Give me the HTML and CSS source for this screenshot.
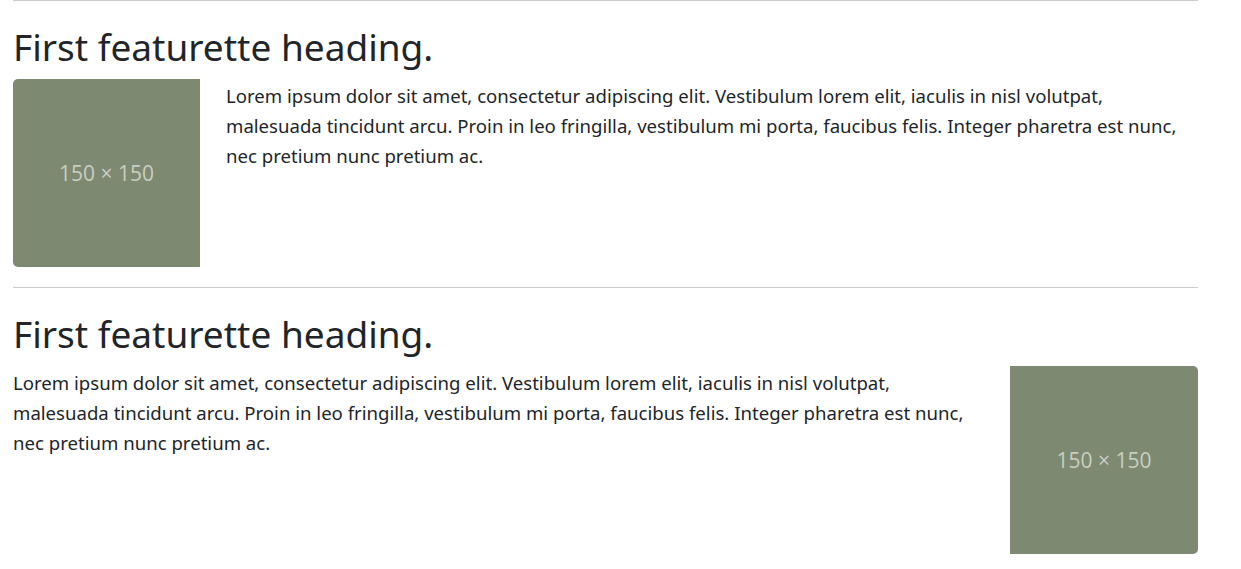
FILE: index.html
```html
<!DOCTYPE html>
<html lang="en">
<head>
<meta charset="utf-8">
<title>Featurettes</title>
<link rel="stylesheet" href="styles.css">
</head>
<body>
<main class="container">
  <section class="featurette">
    <h2 class="featurette-heading">First featurette heading.</h2>
    <div class="featurette-row img-left">
      <div class="placeholder round-left"><span>150 × 150</span></div>
      <p class="lead">Lorem ipsum dolor sit amet, consectetur adipiscing elit. Vestibulum lorem elit, iaculis in nisl volutpat, malesuada tincidunt arcu. Proin in leo fringilla, vestibulum mi porta, faucibus felis. Integer pharetra est nunc, nec pretium nunc pretium ac.</p>
    </div>
  </section>
  <section class="featurette">
    <h2 class="featurette-heading">First featurette heading.</h2>
    <div class="featurette-row img-right">
      <p class="lead">Lorem ipsum dolor sit amet, consectetur adipiscing elit. Vestibulum lorem elit, iaculis in nisl volutpat, malesuada tincidunt arcu. Proin in leo fringilla, vestibulum mi porta, faucibus felis. Integer pharetra est nunc, nec pretium nunc pretium ac.</p>
      <div class="placeholder round-right"><span>150 × 150</span></div>
    </div>
  </section>
</main>
</body>
</html>
```
FILE: styles.css
```css
* { box-sizing: border-box; }
html, body { margin: 0; padding: 0; background: #fff; }
body {
  font-family: "Noto Sans", "Open Sans", sans-serif;
  color: #212529;
}
.container {
  width: 1185px;
  margin-left: 13px;
}
.featurette {
  border-top: 1px solid #c9cacb;
  padding-top: 22px;
  padding-bottom: 20px;
}
.featurette-heading {
  margin: 0 0 8px;
  font-size: 37px;
  font-weight: 400;
  line-height: 48px;
  color: #212529;
}
.featurette-row {
  display: grid;
  align-items: start;
}
.img-left { grid-template-columns: 187px 972px; column-gap: 26px; }
.img-right { grid-template-columns: 972px 188px; column-gap: 25px; }
.lead {
  margin: 0;
  padding-top: 2px;
  font-size: 18.6px;
  line-height: 30px;
}
.placeholder {
  height: 188px;
  background: #7e8972;
  display: flex;
  align-items: center;
  justify-content: center;
}
.placeholder span {
  font-family: "Open Sans", "Noto Sans", sans-serif;
  font-size: 21px;
  color: #c9cec1;
}
.round-left { border-radius: 5px 0 0 5px; }
.round-right { border-radius: 0 5px 5px 0; }
```
